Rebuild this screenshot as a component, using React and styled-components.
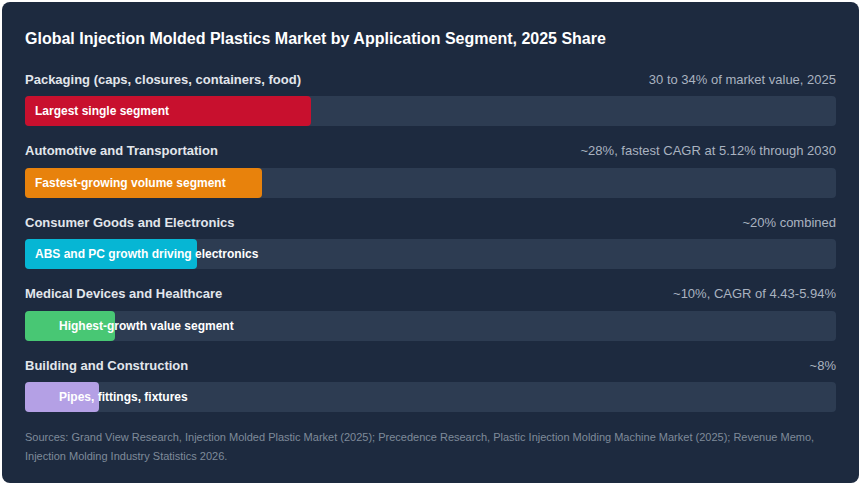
import React from 'react';
import styled, { createGlobalStyle } from 'styled-components';

const Global = createGlobalStyle`
  body { margin: 0; background: #fff; font-family: "Liberation Sans", Arial, sans-serif; }
`;

const Card = styled.div`
  margin: 2px;
  width: 857px;
  height: 481px;
  box-sizing: border-box;
  background: #1d2a3f;
  border-radius: 8px;
  padding: 27px 23px 0 23px;
`;

const Title = styled.h1`
  margin: 0 0 21px;
  color: #fff;
  font-size: 16px;
  font-weight: bold;
  line-height: 20px;
`;

const Row = styled.div`
  margin-bottom: 15.5px;
`;

const Head = styled.div`
  display: flex;
  justify-content: space-between;
  align-items: center;
  height: 18px;
  margin-bottom: 8px;
  font-size: 13px;
`;

const Name = styled.span`
  color: #e2e6ec;
  font-weight: bold;
`;

const Value = styled.span`
  color: #aab3c0;
`;

const Track = styled.div`
  position: relative;
  height: 30px;
  background: #2d3c52;
  border-radius: 4px;
`;

const Fill = styled.div`
  height: 100%;
  width: ${p => p.$w}%;
  background: ${p => p.$c};
  border-radius: 4px;
`;

const BarLabel = styled.span`
  position: absolute;
  left: ${p => p.$left}px;
  top: 0;
  line-height: 30px;
  color: #fff;
  font-size: 12px;
  font-weight: bold;
  white-space: nowrap;
`;

const Sources = styled.p`
  margin: 12px 0 0;
  color: #7f8a9a;
  font-size: 11px;
  line-height: 19px;
`;

const rows = [
  ['Packaging (caps, closures, containers, food)', '30 to 34% of market value, 2025', 35.3, '#c8102e', 'Largest single segment', 10],
  ['Automotive and Transportation', '~28%, fastest CAGR at 5.12% through 2030', 29.2, '#e8820c', 'Fastest-growing volume segment', 10],
  ['Consumer Goods and Electronics', '~20% combined', 21.2, '#06b6d4', 'ABS and PC growth driving electronics', 10],
  ['Medical Devices and Healthcare', '~10%, CAGR of 4.43-5.94%', 11.1, '#48c774', 'Highest-growth value segment', 34],
  ['Building and Construction', '~8%', 9.1, '#b4a0e5', 'Pipes, fittings, fixtures', 34],
];

export default function App() {
  return (
    <>
      <Global />
      <Card>
        <Title>Global Injection Molded Plastics Market by Application Segment, 2025 Share</Title>
        {rows.map(([name, value, w, c, label, left]) => (
          <Row key={name}>
            <Head>
              <Name>{name}</Name>
              <Value>{value}</Value>
            </Head>
            <Track>
              <Fill $w={w} $c={c} />
              <BarLabel $left={left}>{label}</BarLabel>
            </Track>
          </Row>
        ))}
        <Sources>
          Sources: Grand View Research, Injection Molded Plastic Market (2025); Precedence Research, Plastic Injection Molding Machine Market (2025); Revenue Memo, Injection Molding Industry Statistics 2026.
        </Sources>
      </Card>
    </>
  );
}
